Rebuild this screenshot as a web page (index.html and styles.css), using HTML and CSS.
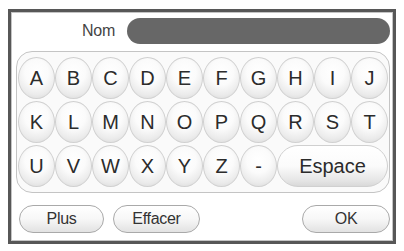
FILE: index.html
```html
<!DOCTYPE html>
<html>
<head>
<meta charset="utf-8">
<link rel="stylesheet" href="styles.css">
</head>
<body>
<div class="frame">
  <div class="name-row">
    <span class="name-label">Nom</span>
    <div class="name-field"></div>
  </div>
  <div class="keyboard">
    <div class="key">A</div><div class="key">B</div><div class="key">C</div><div class="key">D</div><div class="key">E</div><div class="key">F</div><div class="key">G</div><div class="key">H</div><div class="key">I</div><div class="key">J</div>
    <div class="key">K</div><div class="key">L</div><div class="key">M</div><div class="key">N</div><div class="key">O</div><div class="key">P</div><div class="key">Q</div><div class="key">R</div><div class="key">S</div><div class="key">T</div>
    <div class="key">U</div><div class="key">V</div><div class="key">W</div><div class="key">X</div><div class="key">Y</div><div class="key">Z</div><div class="key">-</div><div class="key key-space">Espace</div>
  </div>
  <div class="actions">
    <div class="btn btn-plus">Plus</div>
    <div class="btn btn-clear">Effacer</div>
    <div class="btn btn-ok">OK</div>
  </div>
</div>
</body>
</html>
```
FILE: styles.css
```css
html, body {
  margin: 0;
  padding: 0;
  background: #ffffff;
}
body {
  font-family: "Liberation Sans", Arial, sans-serif;
}
.frame {
  box-sizing: border-box;
  width: 388px;
  height: 235px;
  margin: 9px 8px 0 8px;
  border: 3px solid #575757;
  box-shadow: inset 0 0 0 1px #c4c4c4;
  background: #ffffff;
  padding: 6px 3px 0 5px;
  display: flex;
  flex-direction: column;
}
.name-row {
  display: flex;
  align-items: center;
  gap: 12px;
  height: 26px;
}
.name-label {
  flex: 1;
  text-align: right;
  font-size: 16px;
  color: #444;
  letter-spacing: -0.3px;
}
.name-field {
  width: 263px;
  height: 26px;
  border-radius: 13px;
  background: #676767;
}
.keyboard {
  box-sizing: border-box;
  margin-top: 7px;
  height: 142px;
  border: 1px solid #c4c4c4;
  border-radius: 16px;
  background: #fafafa;
  padding: 4px 1px;
  display: grid;
  grid-template-columns: repeat(10, 1fr);
  grid-template-rows: repeat(3, 44px);
}
.key {
  margin: 1px 0;
  border-radius: 50%;
  border: 1px solid #d0d0d0;
  background: radial-gradient(ellipse 75% 70% at 50% 36%, #ffffff 0%, #fbfbfb 45%, #ebebeb 80%, #dcdcdc 100%);
  display: flex;
  align-items: center;
  justify-content: center;
  font-size: 20px;
  color: #2c2c2c;
  padding-top: 1px;
}
.key-space {
  grid-column: span 3;
  border-radius: 22px;
  background: linear-gradient(#ffffff 0%, #fbfbfb 50%, #e6e6e6 85%, #d9d9d9 100%);
}
.actions {
  margin-top: 12px;
  padding-left: 3px;
  display: flex;
  gap: 9px;
}
.btn {
  box-sizing: border-box;
  height: 28px;
  border-radius: 14px;
  border: 1px solid #a9a9a9;
  background: linear-gradient(#ffffff 0%, #f7f7f7 50%, #e2e2e2 100%);
  display: flex;
  align-items: center;
  justify-content: center;
  font-size: 16px;
  color: #333;
  letter-spacing: -0.3px;
}
.btn-plus { width: 85px; }
.btn-clear { width: 87px; }
.btn-ok { width: 88px; margin-left: auto; }
```
